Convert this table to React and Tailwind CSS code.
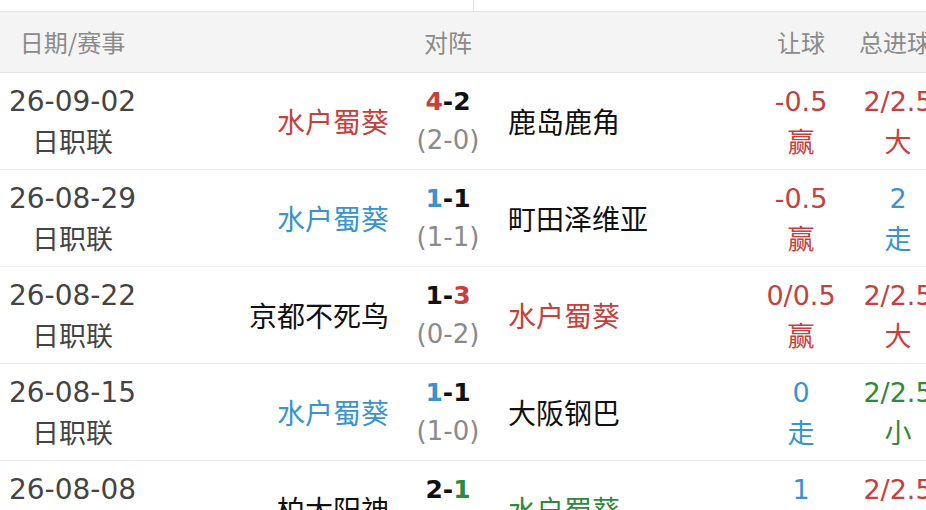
import React from 'react';

const RED = 'text-[#c8403b]';
const BLUE = 'text-[#3a93cf]';
const GREEN = 'text-[#2f8a3a]';
const BLACK = 'text-[#111111]';
const NUM = "font-['DejaVu_Sans',sans-serif]";

const rows = [
  {
    date: '26-09-02', league: '日职联',
    home: '水户蜀葵', homeColor: RED,
    score: ['4', '-2'], scoreColors: [RED, BLACK], half: '(2-0)',
    away: '鹿岛鹿角', awayColor: BLACK,
    hc: '-0.5', hcRes: '赢', hcColor: RED,
    ou: '2/2.5', ouRes: '大', ouColor: RED,
  },
  {
    date: '26-08-29', league: '日职联',
    home: '水户蜀葵', homeColor: BLUE,
    score: ['1', '-1'], scoreColors: [BLUE, BLACK], half: '(1-1)',
    away: '町田泽维亚', awayColor: BLACK,
    hc: '-0.5', hcRes: '赢', hcColor: RED,
    ou: '2', ouRes: '走', ouColor: BLUE,
  },
  {
    date: '26-08-22', league: '日职联',
    home: '京都不死鸟', homeColor: BLACK,
    score: ['1-', '3'], scoreColors: [BLACK, RED], half: '(0-2)',
    away: '水户蜀葵', awayColor: RED,
    hc: '0/0.5', hcRes: '赢', hcColor: RED,
    ou: '2/2.5', ouRes: '大', ouColor: RED,
  },
  {
    date: '26-08-15', league: '日职联',
    home: '水户蜀葵', homeColor: BLUE,
    score: ['1', '-1'], scoreColors: [BLUE, BLACK], half: '(1-0)',
    away: '大阪钢巴', awayColor: BLACK,
    hc: '0', hcRes: '走', hcColor: BLUE,
    ou: '2/2.5', ouRes: '小', ouColor: GREEN,
  },
  {
    date: '26-08-08', league: '日职联',
    home: '柏太阳神', homeColor: BLACK,
    score: ['2-', '1'], scoreColors: [BLACK, GREEN], half: '(1-0)',
    away: '水户蜀葵', awayColor: GREEN,
    hc: '1', hcRes: '走', hcColor: BLUE,
    ou: '2/2.5', ouRes: '大', ouColor: RED,
  },
];

const cols = 'grid grid-cols-[145px_254px_98px_259px_90px_104px]';

export default function App() {
  return (
    <div
      className="w-[926px] h-[510px] overflow-hidden bg-white"
      style={{ fontFamily: '"Noto Sans CJK SC", "Noto Sans", sans-serif' }}
    >
      <div className="w-[950px]">
        {/* top strip */}
        <div className="h-[11px] flex">
          <div className="w-[473px]" />
          <div className="w-px bg-[#e6e6e6]" />
        </div>

        {/* header */}
        <div className={`${cols} h-[62px] items-center bg-[#f4f4f4] border-y border-[#e4e4e4] text-[24px] text-[#8a8a8a]`}>
          <div className="text-center">日期/赛事</div>
          <div />
          <div className="text-center">对阵</div>
          <div />
          <div className="text-center">让球</div>
          <div className="text-center pr-[6px]">总进球</div>
        </div>

        {rows.map((r, i) => (
          <div key={i} className={`${cols} h-[97px] items-center border-b border-[#ececec]`}>
            <div className="flex flex-col items-center text-[#444] leading-[39px]">
              <span className={`${NUM} text-[28px]`}>{r.date}</span>
              <span className="text-[27px]">{r.league}</span>
            </div>
            <div className={`text-right pr-[10px] text-[28px] ${r.homeColor}`}>{r.home}</div>
            <div className="flex flex-col items-center leading-[38px]">
              <span className={`${NUM} text-[25px] font-bold`}>
                <span className={r.scoreColors[0]}>{r.score[0]}</span>
                <span className={r.scoreColors[1]}>{r.score[1]}</span>
              </span>
              <span className={`${NUM} text-[26px] text-[#8a8a8a]`}>{r.half}</span>
            </div>
            <div className={`pl-[11px] text-[28px] ${r.awayColor}`}>{r.away}</div>
            <div className={`flex flex-col items-center leading-[39px] ${r.hcColor}`}>
              <span className={`${NUM} text-[27px]`}>{r.hc}</span>
              <span className="text-[27px]">{r.hcRes}</span>
            </div>
            <div className={`flex flex-col items-center leading-[39px] ${r.ouColor}`}>
              <span className={`${NUM} text-[27px]`}>{r.ou}</span>
              <span className="text-[27px]">{r.ouRes}</span>
            </div>
          </div>
        ))}
      </div>
    </div>
  );
}
